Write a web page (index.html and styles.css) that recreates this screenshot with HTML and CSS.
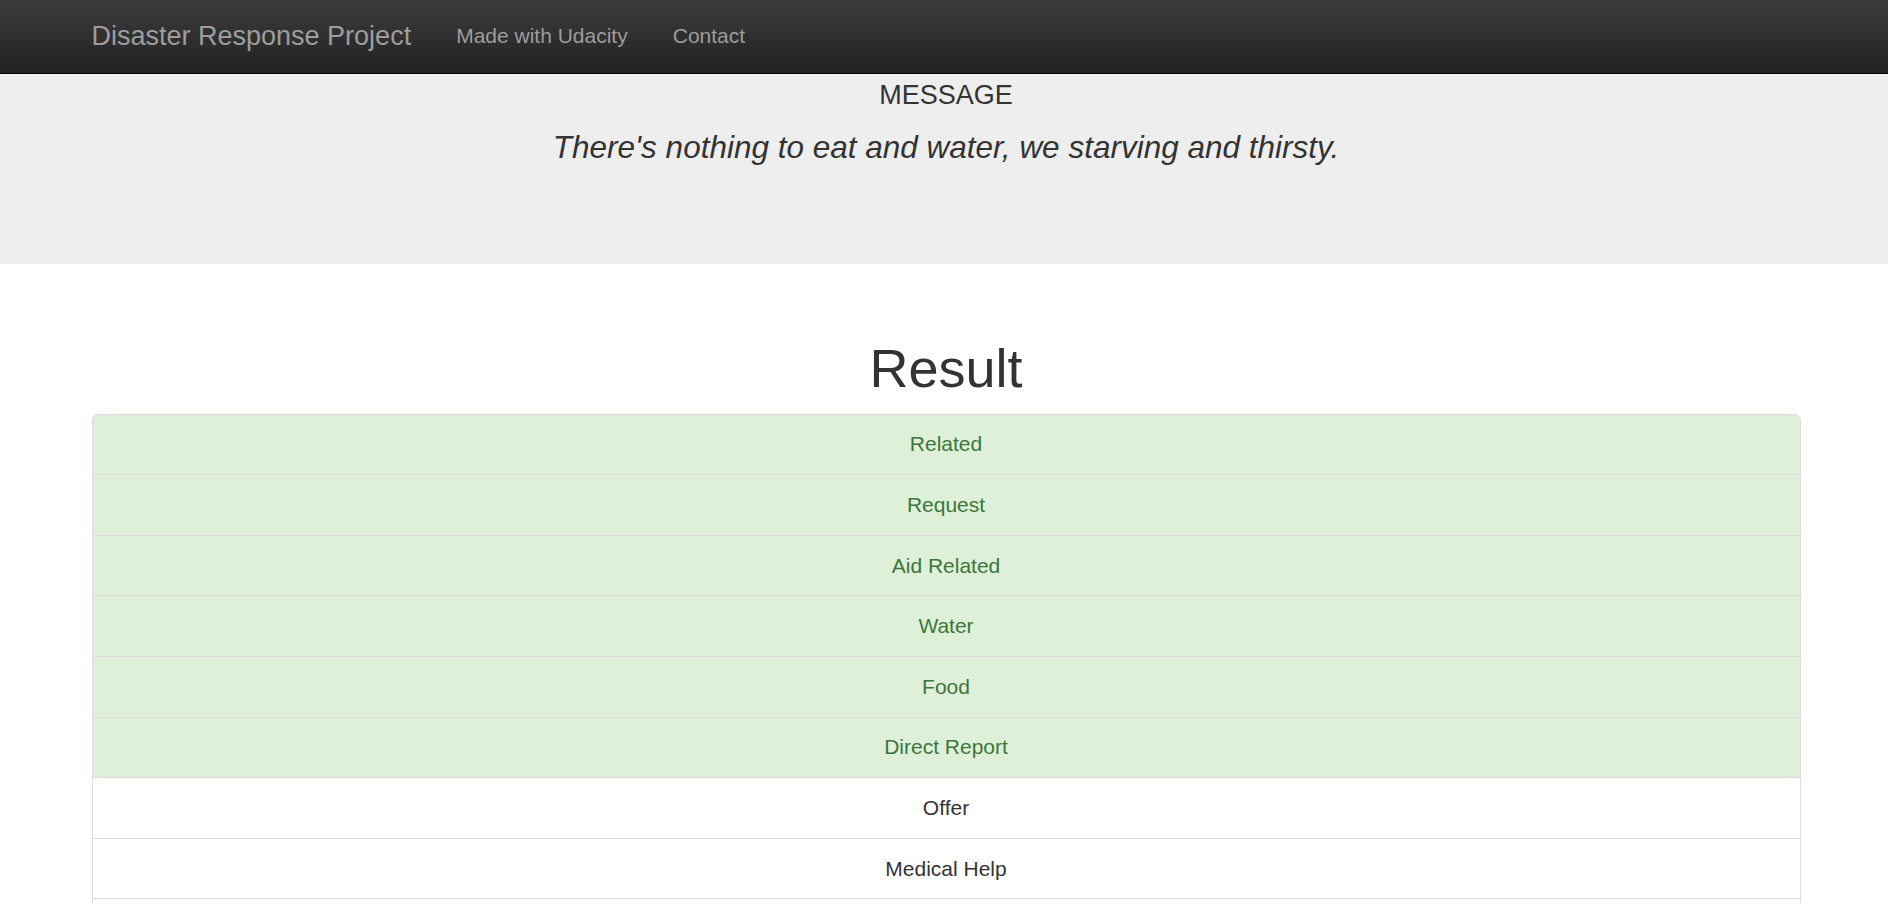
FILE: index.html
```html
<!DOCTYPE html>
<html lang="en">
<head>
<meta charset="utf-8">
<title>Disaster Response Project</title>
<link rel="stylesheet" href="styles.css">
</head>
<body>
<nav class="navbar">
  <div class="container nav-inner">
    <a class="brand" href="#">Disaster Response Project</a>
    <ul class="nav">
      <li><a href="#">Made with Udacity</a></li>
      <li><a href="#">Contact</a></li>
    </ul>
  </div>
</nav>
<div class="jumbotron">
  <div class="container">
    <h4 class="msg-label">MESSAGE</h4>
    <p class="msg">There's nothing to eat and water, we starving and thirsty.</p>
  </div>
</div>
<div class="container">
  <h1 class="result-title">Result</h1>
  <ul class="list-group">
    <li class="list-item success">Related</li>
    <li class="list-item success">Request</li>
    <li class="list-item success">Aid Related</li>
    <li class="list-item success">Water</li>
    <li class="list-item success">Food</li>
    <li class="list-item success">Direct Report</li>
    <li class="list-item">Offer</li>
    <li class="list-item">Medical Help</li>
    <li class="list-item">Medical Products</li>
  </ul>
</div>
</body>
</html>
```
FILE: styles.css
```css
html, body {
  margin: 0;
  padding: 0;
  background: #fff;
}

body {
  font-family: "Liberation Sans", Arial, Helvetica, sans-serif;
  font-size: 21px;
  color: #333;
}

.container {
  max-width: 1709px;
  margin: 0 auto;
  padding-left: 4px;
}

.navbar {
  height: 73px;
  border-bottom: 1px solid #080808;
  background: linear-gradient(to bottom, #3c3c3c 0%, #222 100%);
}

.nav-inner {
  display: flex;
  align-items: flex-start;
  height: 73px;
}

.brand {
  display: block;
  padding: 21px 22.5px 0 0;
  font-size: 27px;
  line-height: 30px;
  color: #9d9d9d;
  text-decoration: none;
}

.nav {
  display: flex;
  margin: 0;
  padding: 0;
  list-style: none;
}

.nav a {
  display: block;
  padding: 20.8px 22.5px 0;
  font-size: 21px;
  line-height: 30px;
  color: #9d9d9d;
  text-decoration: none;
}

.jumbotron {
  background: #eee;
  padding: 6.5px 0 71px;
  text-align: center;
}

.msg-label {
  margin: 0 0 15px;
  font-size: 27px;
  font-weight: normal;
  line-height: 29.7px;
}

.msg {
  margin: 0 0 22.5px;
  font-size: 31.5px;
  font-style: italic;
  line-height: 45px;
}

.result-title {
  margin: 75.5px 0 15px;
  font-size: 54px;
  font-weight: normal;
  line-height: 59.4px;
  text-align: center;
}

.list-group {
  margin: 0;
  padding: 0;
  list-style: none;
}

.list-item {
  padding: 14.8px 22.5px;
  margin-bottom: -1px;
  border: 1px solid #ddd;
  background: #fff;
  color: #333;
  font-size: 21px;
  line-height: 30px;
  text-align: center;
}

.list-item:first-child {
  border-top-left-radius: 6px;
  border-top-right-radius: 6px;
}

.list-item.success {
  background: #dff0d8;
  color: #3c763d;
}
```
